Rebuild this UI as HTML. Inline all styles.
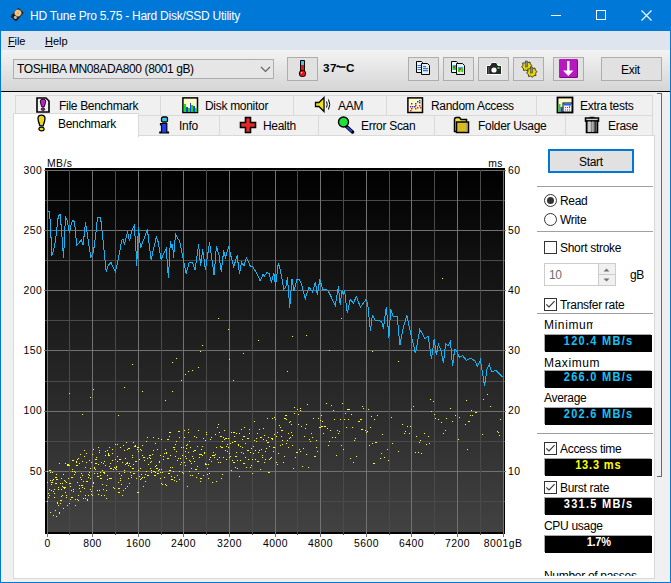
<!DOCTYPE html>
<html><head><meta charset="utf-8">
<style>
*{box-sizing:border-box;margin:0;padding:0}
html,body{width:671px;height:583px;overflow:hidden;background:#F0F0F0;font-family:"Liberation Sans",sans-serif;font-size:11.5px;color:#000}
.a{position:absolute}
.t{position:absolute;white-space:pre;line-height:1;font-size:12px;letter-spacing:-0.3px}
.btn{position:absolute;background:#E1E1E1;border:1px solid #ADADAD}
.tab{position:absolute;background:#F0F0F0;border:1px solid #D9D9D9}
.val{position:absolute;background:#000;box-shadow:-1px -1px 0 #A8A8A8;font-family:"Liberation Sans",sans-serif;font-weight:bold;font-size:12.5px;text-align:center;line-height:1;white-space:pre}
.val span{display:inline-block;transform:scaleX(0.88);transform-origin:50% 0;position:relative;top:0px}
.hr{position:absolute;height:1px;background:#A0A0A0;left:537px;width:116px}
.cb{position:absolute;width:13px;height:13px;border:1px solid #333;background:#fff}
</style></head><body>
<!-- title bar -->
<div class="a" style="left:0;top:0;width:671px;height:31px;background:#0078D7"></div>
<svg class="a" style="left:0;top:0" width="30" height="30" viewBox="0 0 30 30">
 <g transform="translate(17.1 14.6) rotate(41)">
  <rect x="-3.8" y="-5.9" width="7.6" height="11.8" rx="1" fill="#1e1e1e"/>
  <circle cx="-0.4" cy="-1.8" r="3.4" fill="#f6c37a"/>
  <circle cx="-0.4" cy="-1.8" r="1.1" fill="#a8b8d8"/>
  <circle cx="0.5" cy="3.2" r="1.6" fill="#b8b8b8"/>
 </g>
</svg>
<div class="t" style="left:30px;top:10px;color:#fff;font-size:12px;letter-spacing:-0.25px">HD Tune Pro 5.75 - Hard Disk/SSD Utility</div>
<div class="a" style="left:551px;top:15px;width:10px;height:1px;background:#fff"></div>
<div class="a" style="left:596px;top:10px;width:10px;height:10px;border:1px solid #fff"></div>
<svg class="a" style="left:641px;top:10px" width="11" height="11" viewBox="0 0 11 11"><path d="M0.5 0.5L10.5 10.5M10.5 0.5L0.5 10.5" stroke="#fff" stroke-width="1.1"/></svg>
<!-- window borders -->
<div class="a" style="left:0;top:0;width:1px;height:583px;background:#0078D7"></div>
<div class="a" style="left:670px;top:0;width:1px;height:583px;background:#0078D7"></div>
<div class="a" style="left:0;top:582px;width:671px;height:1px;background:#0078D7"></div>
<!-- menu -->
<div class="a" style="left:1px;top:31px;width:669px;height:19px;background:#DEE5EE"></div>
<div class="t" style="left:8px;top:36px;font-size:11px;letter-spacing:-0.1px">File</div>
<div class="a" style="left:8px;top:46px;width:7px;height:1px;background:#000"></div>
<div class="t" style="left:45px;top:36px;font-size:11px;letter-spacing:0">Help</div>
<div class="a" style="left:45px;top:46px;width:8px;height:1px;background:#000"></div>
<!-- toolbar -->
<div class="a" style="left:1px;top:50px;width:669px;height:41px;background:linear-gradient(#F3F3F3,#D5D5D5)"></div>
<div class="a" style="left:1px;top:91px;width:669px;height:1px;background:#000"></div>
<div class="a" style="left:13px;top:59px;width:261px;height:20px;background:#E6E6E6;border:1px solid #ADADAD"></div>
<div class="t" style="left:17px;top:63px;letter-spacing:-0.4px">TOSHIBA MN08ADA800 (8001 gB)</div>
<svg class="a" style="left:260px;top:66px" width="11" height="7"><path d="M1 1L5.5 5.5L10 1" fill="none" stroke="#606060" stroke-width="1.1"/></svg>
<div class="btn" style="left:287px;top:57px;width:31px;height:24px"></div>
<svg class="a" style="left:297px;top:59px" width="11" height="19" viewBox="0 0 11 19">
 <rect x="3" y="1" width="5" height="13" rx="1" fill="#000"/>
 <rect x="4" y="2" width="3" height="4" fill="#3cc8f0"/>
 <rect x="4" y="6" width="3" height="8" fill="#e01818"/>
 <circle cx="5.5" cy="14.5" r="3.6" fill="#000"/>
 <circle cx="5.5" cy="14.5" r="2.7" fill="#e01818"/>
 <circle cx="4.6" cy="13.8" r="0.8" fill="#fff"/>
</svg>
<div class="t" style="left:323px;top:62px;font-weight:bold;font-size:11.7px;letter-spacing:0.4px">37</div>
<svg class="a" style="left:336px;top:64px" width="10" height="5"><path d="M0.8 3.2Q1.8 1.2 3 2.4L3.8 3H9.5" fill="none" stroke="#000" stroke-width="1.6"/></svg>
<div class="t" style="left:346px;top:62px;font-weight:bold;font-size:11.7px;letter-spacing:0">C</div>
<div class="btn" style="left:408px;top:57px;width:31px;height:24px"></div>
<div class="btn" style="left:443px;top:57px;width:31px;height:24px"></div>
<div class="btn" style="left:478px;top:57px;width:31px;height:24px"></div>
<div class="btn" style="left:513px;top:57px;width:31px;height:24px"></div>
<div class="btn" style="left:553px;top:57px;width:31px;height:24px"></div>
<div class="btn" style="left:601px;top:57px;width:61px;height:24px"></div>
<div class="t" style="left:621px;top:64px">Exit</div>
<!-- tabs -->
<div class="tab" style="left:15px;top:95px;width:146px;height:21px"></div>
<div class="tab" style="left:160px;top:95px;width:134px;height:21px"></div>
<div class="tab" style="left:293px;top:95px;width:94px;height:21px"></div>
<div class="tab" style="left:386px;top:95px;width:151px;height:21px"></div>
<div class="tab" style="left:536px;top:95px;width:117px;height:21px"></div>
<div class="tab" style="left:137px;top:115px;width:83px;height:21px"></div>
<div class="tab" style="left:219px;top:115px;width:100px;height:21px"></div>
<div class="tab" style="left:318px;top:115px;width:117px;height:21px"></div>
<div class="tab" style="left:434px;top:115px;width:132px;height:21px"></div>
<div class="tab" style="left:565px;top:115px;width:88px;height:21px"></div>
<div class="a" style="left:13px;top:135px;width:642px;height:444px;background:#fff;border:1px solid #D9D9D9"></div>
<div class="a" style="left:13px;top:113px;width:126px;height:24px;background:#fff;border:1px solid #D9D9D9;border-bottom:none"></div>
<div class="t" style="left:59px;top:100px">File Benchmark</div>
<div class="t" style="left:205px;top:100px">Disk monitor</div>
<div class="t" style="left:338px;top:100px">AAM</div>
<div class="t" style="left:431px;top:100px">Random Access</div>
<div class="t" style="left:580px;top:100px">Extra tests</div>
<div class="t" style="left:58px;top:118px">Benchmark</div>
<div class="t" style="left:179px;top:120px">Info</div>
<div class="t" style="left:263px;top:120px">Health</div>
<div class="t" style="left:361px;top:120px">Error Scan</div>
<div class="t" style="left:478px;top:120px">Folder Usage</div>
<div class="t" style="left:608px;top:120px">Erase</div>
<!-- toolbar icons -->
<svg class="a" style="left:411px;top:57px" width="24" height="22" viewBox="0 0 24 22">
 <path d="M5.5 4.5H10.5L11.5 5.5V15.5H5.5Z" fill="#f4f4f4" stroke="#000"/>
 <rect x="6.5" y="8" width="4" height="1" fill="#1e7ee0"/><rect x="6.5" y="10" width="4" height="1" fill="#1e7ee0"/><rect x="6.5" y="12" width="4" height="1" fill="#1e7ee0"/>
 <path d="M12 8H17V18H12Z" fill="#707070" opacity="0.5"/>
 <path d="M10.5 6.5H16.5L18.5 8.5V17.5H10.5Z" fill="#ececec" stroke="#000"/>
 <rect x="12" y="9" width="3" height="1.2" fill="#1e7ee0"/><rect x="12" y="11" width="5" height="1.2" fill="#1e7ee0"/><rect x="12" y="13" width="5" height="1.2" fill="#1e7ee0"/>
</svg>
<svg class="a" style="left:446px;top:57px" width="24" height="22" viewBox="0 0 24 22">
 <path d="M5.5 4.5H10.5L11.5 5.5V15.5H5.5Z" fill="#f4f4f4" stroke="#000"/>
 <rect x="6.5" y="8" width="4" height="1" fill="#30b0f0"/><rect x="6.5" y="9" width="4" height="4" fill="#20d040"/><circle cx="8" cy="10" r="0.9" fill="#e02020"/>
 <path d="M12 8H17V18H12Z" fill="#707070" opacity="0.5"/>
 <path d="M10.5 6.5H16.5L18.5 8.5V17.5H10.5Z" fill="#ececec" stroke="#000"/>
 <rect x="12" y="10" width="5" height="1" fill="#30b0f0"/><rect x="12" y="11" width="5" height="4" fill="#20d040"/><circle cx="14" cy="12" r="0.9" fill="#e02020"/><rect x="14" y="13" width="1.5" height="2" fill="#e0d020"/>
</svg>
<svg class="a" style="left:485px;top:61px" width="18" height="15" viewBox="0 0 18 15">
 <path d="M1.5 4.5H5L6.5 1.5H11.5L13 4.5H16.5V13.5H1.5Z" fill="#262626" stroke="#fff" stroke-width="1"/>
 <rect x="3" y="6" width="1.3" height="7" fill="#555"/>
 <circle cx="9" cy="9" r="2.6" fill="#fff"/>
 <rect x="12.5" y="6" width="2" height="2" fill="#20e040"/>
</svg>
<svg class="a" style="left:519px;top:59px" width="20" height="19" viewBox="0 0 20 19">
 <g fill="#e8d800" stroke="#222" stroke-width="0.8">
 <path d="M7.5 2L9 3.5L11 3L11.3 5.2L13 6.5L11.6 8.2L12 10.5L9.8 10.6L8.5 12.3L6.8 11L4.6 11.5L4.3 9.3L2.6 8L4 6.3L3.6 4L5.8 3.9Z"/>
 <path d="M12.5 8L14 9.5L16 9L16.3 11.2L18 12.5L16.6 14.2L17 16.5L14.8 16.6L13.5 18.3L11.8 17L9.6 17.5L9.3 15.3L7.6 14L9 12.3L8.6 10L10.8 9.9Z"/>
 </g>
 <rect x="6.5" y="2" width="2" height="6" fill="#8a8a8a" stroke="#333" stroke-width="0.5"/>
 <rect x="11.5" y="8" width="2" height="6" fill="#8a8a8a" stroke="#333" stroke-width="0.5"/>
</svg>
<svg class="a" style="left:559px;top:59px" width="19" height="19" viewBox="0 0 19 19">
 <rect x="0" y="0" width="19" height="19" rx="1.5" fill="#7a0a80"/>
 <rect x="0" y="0" width="18" height="18" rx="1.5" fill="#b818c0"/>
 <path d="M8 2H10.5V11.5H14.5L9.25 17L4 11.5H8Z" fill="#fff"/>
</svg>
<!-- tab icons -->
<svg class="a" style="left:35px;top:96px" width="17" height="18" viewBox="0 0 17 18">
 <path d="M2 2H11L14 5V16H2Z" fill="#f2f2f2" stroke="#000" stroke-width="1.6"/>
 <path d="M5.3 5.2Q5.3 3 8 3Q10.7 3 10.7 5.2Q10.7 7.2 9.1 11H6.9Q5.3 7.2 5.3 5.2Z" fill="#c020c0" stroke="#000" stroke-width="0.9"/>
 <ellipse cx="8" cy="13.2" rx="1.8" ry="1.2" fill="#c020c0" stroke="#000" stroke-width="0.8"/>
</svg>
<svg class="a" style="left:36px;top:114px" width="11" height="18" viewBox="0 0 11 18">
 <path d="M2 4.6Q2 1.2 5.5 1.2Q9 1.2 9 4.6Q9 7 7.1 11.8H3.9Q2 7 2 4.6Z" fill="#e8d820" stroke="#000" stroke-width="1.3"/>
 <ellipse cx="5.5" cy="15" rx="2.6" ry="1.9" fill="#e8d820" stroke="#000" stroke-width="1.2"/>
</svg>
<svg class="a" style="left:182px;top:97px" width="17" height="17" viewBox="0 0 17 17">
 <rect x="0.9" y="0.9" width="14.6" height="14.6" fill="#fffbc8" stroke="#000" stroke-width="1.5"/>
 <path d="M2 7H4V15H2ZM4 10H6V15H4ZM6 11H8V15H6ZM8 6H9V15H8ZM9 8H11V15H9ZM11 9H13V15H11ZM13 11H15V15H13Z" fill="#10e010"/>
 <path d="M4 10H6V15H4ZM8 6H9V15H8ZM11 9H13V15H11Z" fill="#2040f0"/>
</svg>
<svg class="a" style="left:159px;top:116px" width="11" height="18" viewBox="0 0 11 18">
 <rect x="2.5" y="1" width="6" height="5" rx="1.5" fill="#30c8f0" stroke="#000" stroke-width="1.3"/>
 <path d="M1.5 7.5H7.8V16H9.5V17H0.8V16H2.5V9H1.5Z" fill="#2040f0" stroke="#000" stroke-width="1.2"/>
</svg>
<svg class="a" style="left:314px;top:96px" width="19" height="17" viewBox="0 0 19 17">
 <path d="M1.5 6.5H5L10 1.5V15.5L5 10.5H1.5Z" fill="#f0e020" stroke="#000" stroke-width="1.3"/>
 <path d="M12.5 5.5Q14 8.5 12.5 11.5M14.5 3.5Q17 8.5 14.5 13.5" fill="none" stroke="#000" stroke-width="1"/>
</svg>
<svg class="a" style="left:239px;top:116px" width="19" height="18" viewBox="0 0 19 18">
 <path d="M6.5 1.5H11.5V6.5H16.5V11.5H11.5V16.5H6.5V11.5H1.5V6.5H6.5Z" fill="#e82828" stroke="#000" stroke-width="1.6"/>
</svg>
<svg class="a" style="left:407px;top:97px" width="18" height="17" viewBox="0 0 18 17">
 <rect x="0.9" y="0.9" width="14.6" height="14.6" fill="#fffbc8" stroke="#000" stroke-width="1.5"/>
 <g fill="#2040f0"><rect x="3" y="9" width="1.5" height="1.5"/><rect x="4" y="6" width="1.5" height="1.5"/><rect x="7" y="9" width="1.5" height="1.5"/><rect x="8" y="6" width="1.5" height="1.5"/><rect x="10" y="4" width="1.5" height="1.5"/><rect x="12" y="3" width="1.5" height="1.5"/><rect x="12" y="5" width="1.5" height="1.5"/></g>
 <g fill="#e02020"><rect x="3" y="13" width="1.5" height="1.5"/><rect x="4" y="11" width="1.5" height="1.5"/><rect x="5" y="9" width="1.5" height="1.5"/><rect x="8" y="11" width="1.5" height="1.5"/><rect x="8" y="8" width="1.5" height="1.5"/><rect x="10" y="10" width="1.5" height="1.5"/><rect x="12" y="8" width="1.5" height="1.5"/><rect x="13" y="10" width="1.5" height="1.5"/></g>
</svg>
<svg class="a" style="left:337px;top:116px" width="18" height="18" viewBox="0 0 18 18">
 <path d="M9.5 10.5L15.5 16" stroke="#000" stroke-width="3.5" stroke-linecap="round"/>
 <path d="M9.8 10.8L15 15.5" stroke="#3040e0" stroke-width="1.8"/>
 <circle cx="6.5" cy="6" r="5" fill="#20e040" stroke="#000" stroke-width="1.4"/>
</svg>
<svg class="a" style="left:556px;top:96px" width="18" height="18" viewBox="0 0 18 18">
 <rect x="1.5" y="1.5" width="15" height="15" fill="#fffbc8" stroke="#000" stroke-width="1.8"/>
 <path d="M2.5 8H4.5V16H2.5Z" fill="#10e010"/><path d="M4.5 11H6.5V16H4.5Z" fill="#2040f0"/>
 <rect x="7" y="7" width="9" height="9" fill="#f4f4f4" stroke="#000" stroke-width="1"/>
 <rect x="7.5" y="7.5" width="8" height="2" fill="#2060f0"/>
 <g fill="#e02020"><rect x="9" y="11" width="1" height="1"/><rect x="11" y="11" width="1" height="1"/><rect x="13" y="11" width="1" height="1"/><rect x="9" y="13.5" width="1" height="1"/><rect x="13" y="13.5" width="1" height="1"/></g>
 <g fill="#2040f0"><rect x="11" y="13.5" width="1" height="1"/><rect x="13" y="9.8" width="1" height="1"/></g>
</svg>
<svg class="a" style="left:453px;top:116px" width="18" height="18" viewBox="0 0 18 18">
 <path d="M1.5 3.5Q1.5 1.5 3.5 1.5H6.5L8 3.5H13.5V15.5H1.5Z" fill="#f4e040" stroke="#000" stroke-width="1.5"/>
 <path d="M3.5 6H15.5V16.5H3.5Z" fill="#d8bc20" stroke="#000" stroke-width="1.5"/>
 <rect x="13" y="7" width="1" height="9" fill="#b0a070"/>
</svg>
<svg class="a" style="left:584px;top:116px" width="17" height="18" viewBox="0 0 17 18">
 <rect x="5.5" y="0.8" width="5" height="2.5" fill="#000"/>
 <rect x="1.5" y="2" width="13" height="3.2" fill="#d0d0d0" stroke="#000" stroke-width="1.5"/>
 <path d="M2.5 5H13.5V16.5H2.5Z" fill="#888" stroke="#000" stroke-width="1.6"/>
 <rect x="4" y="5.5" width="1.5" height="10.5" fill="#c8c8c8"/><rect x="5.5" y="5.5" width="1" height="10.5" fill="#f4f4f4"/><rect x="8" y="5.5" width="1.5" height="10.5" fill="#aaa"/><rect x="10.5" y="5.5" width="1.5" height="10.5" fill="#333"/>
</svg>
<!-- bracket -->
<div class="a" style="left:661px;top:93px;width:1px;height:384px;background:#696969"></div>
<div class="a" style="left:657px;top:93px;width:5px;height:1px;background:#696969"></div>
<div class="a" style="left:657px;top:476px;width:5px;height:1px;background:#696969"></div>
<!-- chart -->
<svg class="a" style="left:0;top:0" width="671" height="583" viewBox="0 0 671 583">
 <defs><linearGradient id="bg" x1="0" y1="0" x2="0" y2="1"><stop offset="0" stop-color="#000"/><stop offset="1" stop-color="#424242"/></linearGradient></defs>
 <rect x="45" y="168" width="460" height="366" fill="#000"/>
 <rect x="47" y="170" width="457" height="362" fill="url(#bg)"/>
 <g stroke="#646464" stroke-width="1" shape-rendering="crispEdges">
 <line x1="44" y1="170.5" x2="506" y2="170.5" stroke="#727272"/>
 <line x1="45" y1="200.5" x2="505" y2="200.5" stroke="#4A4A4A"/>
 <line x1="44" y1="230.5" x2="506" y2="230.5" stroke="#727272"/>
 <line x1="45" y1="260.5" x2="505" y2="260.5" stroke="#4A4A4A"/>
 <line x1="44" y1="290.5" x2="506" y2="290.5" stroke="#727272"/>
 <line x1="45" y1="320.5" x2="505" y2="320.5" stroke="#4A4A4A"/>
 <line x1="44" y1="350.5" x2="506" y2="350.5" stroke="#727272"/>
 <line x1="45" y1="381.5" x2="505" y2="381.5" stroke="#4A4A4A"/>
 <line x1="44" y1="411.5" x2="506" y2="411.5" stroke="#727272"/>
 <line x1="45" y1="441.5" x2="505" y2="441.5" stroke="#4A4A4A"/>
 <line x1="44" y1="471.5" x2="506" y2="471.5" stroke="#727272"/>
 <line x1="45" y1="501.5" x2="505" y2="501.5" stroke="#4A4A4A"/>
 <line x1="47.5" y1="170" x2="47.5" y2="537" stroke="#727272"/>
 <line x1="69.5" y1="170" x2="69.5" y2="535" stroke="#4A4A4A"/>
 <line x1="92.5" y1="170" x2="92.5" y2="537" stroke="#727272"/>
 <line x1="115.5" y1="170" x2="115.5" y2="535" stroke="#4A4A4A"/>
 <line x1="138.5" y1="170" x2="138.5" y2="537" stroke="#727272"/>
 <line x1="161.5" y1="170" x2="161.5" y2="535" stroke="#4A4A4A"/>
 <line x1="183.5" y1="170" x2="183.5" y2="537" stroke="#727272"/>
 <line x1="206.5" y1="170" x2="206.5" y2="535" stroke="#4A4A4A"/>
 <line x1="229.5" y1="170" x2="229.5" y2="537" stroke="#727272"/>
 <line x1="252.5" y1="170" x2="252.5" y2="535" stroke="#4A4A4A"/>
 <line x1="275.5" y1="170" x2="275.5" y2="537" stroke="#727272"/>
 <line x1="297.5" y1="170" x2="297.5" y2="535" stroke="#4A4A4A"/>
 <line x1="320.5" y1="170" x2="320.5" y2="537" stroke="#727272"/>
 <line x1="343.5" y1="170" x2="343.5" y2="535" stroke="#4A4A4A"/>
 <line x1="366.5" y1="170" x2="366.5" y2="537" stroke="#727272"/>
 <line x1="389.5" y1="170" x2="389.5" y2="535" stroke="#4A4A4A"/>
 <line x1="411.5" y1="170" x2="411.5" y2="537" stroke="#727272"/>
 <line x1="434.5" y1="170" x2="434.5" y2="535" stroke="#4A4A4A"/>
 <line x1="457.5" y1="170" x2="457.5" y2="537" stroke="#727272"/>
 <line x1="480.5" y1="170" x2="480.5" y2="535" stroke="#4A4A4A"/>
 <line x1="503.5" y1="170" x2="503.5" y2="537" stroke="#727272"/>
 </g>
 <path d="M47 471h1v1h-1zM47 482h1v1h-1zM47 501h1v1h-1zM48 497h1v1h-1zM48 497h1v1h-1zM48 493h1v1h-1zM49 470h2v1h-2zM49 489h1v1h-1zM49 495h1v1h-1zM50 512h1v1h-1zM50 472h1v1h-1zM50 480h1v1h-1zM51 482h1v1h-1zM51 490h1v1h-1zM51 484h1v1h-1zM52 480h1v1h-1zM52 482h1v1h-1zM52 472h1v1h-1zM53 491h1v1h-1zM53 479h1v1h-1zM53 515h1v1h-1zM54 493h1v1h-1zM54 489h1v1h-1zM54 497h1v1h-1zM55 510h1v1h-1zM55 483h2v1h-2zM55 477h2v1h-2zM56 474h1v1h-1zM56 479h1v1h-1zM56 516h1v1h-1zM57 479h1v1h-1zM57 502h1v1h-1zM57 503h1v1h-1zM58 487h1v1h-1zM58 489h1v1h-1zM58 505h1v1h-1zM59 463h1v1h-1zM59 513h1v1h-1zM59 512h1v1h-1zM60 483h1v1h-1zM60 500h2v1h-2zM60 503h1v1h-1zM61 478h1v1h-1zM61 496h1v1h-1zM61 489h1v1h-1zM62 495h1v1h-1zM62 486h1v1h-1zM62 483h1v1h-1zM63 474h1v1h-1zM63 487h1v1h-1zM63 508h1v1h-1zM64 487h2v1h-2zM64 480h1v1h-1zM64 488h1v1h-1zM65 463h1v1h-1zM65 492h1v1h-1zM65 481h1v1h-1zM66 482h1v1h-1zM66 495h1v1h-1zM66 497h1v1h-1zM67 465h2v1h-2zM67 505h1v1h-1zM67 464h1v1h-1zM68 478h1v1h-1zM68 464h1v1h-1zM69 483h2v1h-2zM69 465h1v1h-1zM69 503h1v1h-1zM70 483h1v1h-1zM70 499h1v1h-1zM70 486h1v1h-1zM71 477h2v1h-2zM71 497h2v1h-2zM71 490h1v1h-1zM72 471h1v1h-1zM72 460h1v1h-1zM72 469h1v1h-1zM73 460h1v1h-1zM73 491h1v1h-1zM73 489h1v1h-1zM74 471h1v1h-1zM74 474h1v1h-1zM74 474h1v1h-1zM75 499h1v1h-1zM75 472h1v1h-1zM75 505h1v1h-1zM76 461h1v1h-1zM76 462h1v1h-1zM76 465h2v1h-2zM77 482h1v1h-1zM77 499h1v1h-1zM77 459h1v1h-1zM78 500h1v1h-1zM78 458h1v1h-1zM78 495h1v1h-1zM79 488h1v1h-1zM79 463h1v1h-1zM79 485h1v1h-1zM80 491h1v1h-1zM80 454h1v1h-1zM80 477h1v1h-1zM81 473h1v1h-1zM81 485h2v1h-2zM81 479h1v1h-1zM82 487h1v1h-1zM82 475h1v1h-1zM82 461h1v1h-1zM83 498h1v1h-1zM83 481h1v1h-1zM84 456h1v1h-1zM84 488h1v1h-1zM84 450h1v1h-1zM85 467h1v1h-1zM85 495h1v1h-1zM85 498h1v1h-1zM86 481h1v1h-1zM86 453h1v1h-1zM86 462h1v1h-1zM87 499h1v1h-1zM87 500h1v1h-1zM87 481h1v1h-1zM88 477h1v1h-1zM88 495h1v1h-1zM88 474h1v1h-1zM89 475h1v1h-1zM89 472h1v1h-1zM89 460h1v1h-1zM90 489h1v1h-1zM90 468h1v1h-1zM90 478h1v1h-1zM91 462h1v1h-1zM91 494h1v1h-1zM91 491h1v1h-1zM92 495h1v1h-1zM92 454h1v1h-1zM92 486h1v1h-1zM93 449h1v1h-1zM93 482h1v1h-1zM93 483h1v1h-1zM94 468h1v1h-1zM94 467h1v1h-1zM94 473h1v1h-1zM95 463h2v1h-2zM95 469h1v1h-1zM95 459h2v1h-2zM96 457h1v1h-1zM96 457h1v1h-1zM96 459h1v1h-1zM97 473h1v1h-1zM97 490h1v1h-1zM97 476h2v1h-2zM98 494h1v1h-1zM98 464h1v1h-1zM98 447h1v1h-1zM99 450h1v1h-1zM99 452h1v1h-1zM99 490h1v1h-1zM100 475h1v1h-1zM100 478h1v1h-1zM100 472h1v1h-1zM101 478h1v1h-1zM101 462h1v1h-1zM101 495h1v1h-1zM102 484h1v1h-1zM102 470h1v1h-1zM103 489h1v1h-1zM103 463h1v1h-1zM103 472h2v1h-2zM104 495h1v1h-1zM104 461h1v1h-1zM104 473h1v1h-1zM105 451h1v1h-1zM105 465h1v1h-1zM105 455h1v1h-1zM106 485h1v1h-1zM106 498h1v1h-1zM106 490h1v1h-1zM107 475h1v1h-1zM107 479h1v1h-1zM107 450h1v1h-1zM108 453h1v1h-1zM108 455h2v1h-2zM108 454h1v1h-1zM109 447h1v1h-1zM109 478h2v1h-2zM109 466h1v1h-1zM110 468h1v1h-1zM110 463h1v1h-1zM110 468h1v1h-1zM111 468h1v1h-1zM111 478h1v1h-1zM112 460h1v1h-1zM112 449h1v1h-1zM112 453h1v1h-1zM113 469h1v1h-1zM113 487h1v1h-1zM114 488h1v1h-1zM114 467h1v1h-1zM115 444h1v1h-1zM115 468h1v1h-1zM115 459h1v1h-1zM116 466h1v1h-1zM116 469h1v1h-1zM116 467h1v1h-1zM117 456h1v1h-1zM117 461h1v1h-1zM117 444h1v1h-1zM118 492h1v1h-1zM118 482h1v1h-1zM118 488h2v1h-2zM119 473h1v1h-1zM119 492h1v1h-1zM119 459h2v1h-2zM120 478h1v1h-1zM120 447h1v1h-1zM120 480h1v1h-1zM121 475h1v1h-1zM121 484h1v1h-1zM122 462h1v1h-1zM122 495h1v1h-1zM123 445h1v1h-1zM123 490h1v1h-1zM124 450h1v1h-1zM124 472h1v1h-1zM124 470h1v1h-1zM125 488h1v1h-1zM125 458h1v1h-1zM125 464h1v1h-1zM126 442h1v1h-1zM126 463h2v1h-2zM127 462h1v1h-1zM127 449h1v1h-1zM127 486h1v1h-1zM128 465h1v1h-1zM128 448h2v1h-2zM128 478h1v1h-1zM129 463h1v1h-1zM129 483h1v1h-1zM130 466h1v1h-1zM130 472h1v1h-1zM131 475h1v1h-1zM131 477h1v1h-1zM132 455h1v1h-1zM132 468h2v1h-2zM132 457h1v1h-1zM133 473h1v1h-1zM133 464h1v1h-1zM133 442h1v1h-1zM134 446h2v1h-2zM134 473h1v1h-1zM135 461h1v1h-1zM135 445h1v1h-1zM136 478h1v1h-1zM136 461h1v1h-1zM137 449h1v1h-1zM137 447h2v1h-2zM137 492h2v1h-2zM138 447h1v1h-1zM138 451h1v1h-1zM138 470h1v1h-1zM139 476h1v1h-1zM139 459h1v1h-1zM140 449h1v1h-1zM140 468h1v1h-1zM140 479h1v1h-1zM141 478h1v1h-1zM141 474h1v1h-1zM141 450h1v1h-1zM142 445h1v1h-1zM142 455h1v1h-1zM142 477h1v1h-1zM143 486h1v1h-1zM143 457h1v1h-1zM144 477h1v1h-1zM144 457h1v1h-1zM144 460h1v1h-1zM145 481h1v1h-1zM145 474h1v1h-1zM146 441h1v1h-1zM146 471h1v1h-1zM147 458h1v1h-1zM147 475h1v1h-1zM147 437h1v1h-1zM148 464h1v1h-1zM148 475h1v1h-1zM148 464h1v1h-1zM149 457h1v1h-1zM149 455h2v1h-2zM150 458h1v1h-1zM150 462h1v1h-1zM150 468h1v1h-1zM151 470h1v1h-1zM151 472h1v1h-1zM151 461h1v1h-1zM152 454h1v1h-1zM152 454h1v1h-1zM153 450h1v1h-1zM153 471h1v1h-1zM153 437h1v1h-1zM154 475h2v1h-2zM154 471h1v1h-1zM155 466h1v1h-1zM155 443h1v1h-1zM155 472h1v1h-1zM156 468h1v1h-1zM156 465h1v1h-1zM157 449h1v1h-1zM157 473h2v1h-2zM157 468h1v1h-1zM158 438h1v1h-1zM158 470h1v1h-1zM159 461h1v1h-1zM159 469h1v1h-1zM159 462h1v1h-1zM160 472h1v1h-1zM160 455h1v1h-1zM160 478h1v1h-1zM161 469h1v1h-1zM161 483h1v1h-1zM161 439h1v1h-1zM162 484h1v1h-1zM162 472h1v1h-1zM163 459h1v1h-1zM163 456h1v1h-1zM164 477h1v1h-1zM164 453h1v1h-1zM165 449h1v1h-1zM165 484h1v1h-1zM166 485h1v1h-1zM166 453h1v1h-1zM166 452h1v1h-1zM167 439h2v1h-2zM167 458h2v1h-2zM168 473h2v1h-2zM168 458h1v1h-1zM169 432h2v1h-2zM169 436h1v1h-1zM169 470h2v1h-2zM170 455h1v1h-1zM170 467h1v1h-1zM171 476h1v1h-1zM171 479h1v1h-1zM172 479h1v1h-1zM172 467h1v1h-1zM173 447h2v1h-2zM173 471h1v1h-1zM174 480h1v1h-1zM174 477h1v1h-1zM174 449h1v1h-1zM175 444h1v1h-1zM175 444h1v1h-1zM175 456h1v1h-1zM176 481h1v1h-1zM176 441h1v1h-1zM176 451h1v1h-1zM177 460h1v1h-1zM177 475h1v1h-1zM178 431h2v1h-2zM178 458h1v1h-1zM179 479h1v1h-1zM179 437h1v1h-1zM179 471h1v1h-1zM180 458h1v1h-1zM180 464h1v1h-1zM181 462h1v1h-1zM181 447h1v1h-1zM182 472h1v1h-1zM182 455h1v1h-1zM183 473h1v1h-1zM183 447h1v1h-1zM184 430h1v1h-1zM184 462h1v1h-1zM184 437h1v1h-1zM185 465h1v1h-1zM185 456h1v1h-1zM185 451h1v1h-1zM186 445h1v1h-1zM186 448h1v1h-1zM186 458h1v1h-1zM187 444h1v1h-1zM187 486h1v1h-1zM188 432h1v1h-1zM188 429h1v1h-1zM188 452h1v1h-1zM189 441h1v1h-1zM189 471h1v1h-1zM189 460h1v1h-1zM190 475h1v1h-1zM190 461h1v1h-1zM190 447h1v1h-1zM191 468h1v1h-1zM191 463h1v1h-1zM192 456h1v1h-1zM192 475h1v1h-1zM193 451h1v1h-1zM193 458h1v1h-1zM194 436h1v1h-1zM194 450h1v1h-1zM194 461h1v1h-1zM195 469h2v1h-2zM195 450h1v1h-1zM196 477h1v1h-1zM196 437h1v1h-1zM197 466h1v1h-1zM197 446h1v1h-1zM198 473h1v1h-1zM198 430h1v1h-1zM199 457h1v1h-1zM199 454h2v1h-2zM200 481h1v1h-1zM200 478h2v1h-2zM200 454h1v1h-1zM201 454h1v1h-1zM201 449h1v1h-1zM202 455h1v1h-1zM202 446h1v1h-1zM203 475h1v1h-1zM203 438h1v1h-1zM204 453h1v1h-1zM204 452h1v1h-1zM205 440h1v1h-1zM205 463h1v1h-1zM205 464h2v1h-2zM206 432h1v1h-1zM206 434h1v1h-1zM207 474h1v1h-1zM207 468h1v1h-1zM208 478h1v1h-1zM208 464h1v1h-1zM209 473h1v1h-1zM209 459h1v1h-1zM210 457h1v1h-1zM210 439h1v1h-1zM211 461h1v1h-1zM211 437h1v1h-1zM212 455h1v1h-1zM212 482h1v1h-1zM213 452h1v1h-1zM213 455h2v1h-2zM214 457h1v1h-1zM214 455h1v1h-1zM215 434h1v1h-1zM215 454h1v1h-1zM216 481h1v1h-1zM216 447h1v1h-1zM217 459h1v1h-1zM217 427h1v1h-1zM218 424h1v1h-1zM218 462h1v1h-1zM219 457h1v1h-1zM219 432h1v1h-1zM220 462h1v1h-1zM220 446h1v1h-1zM220 436h2v1h-2zM221 447h2v1h-2zM221 478h1v1h-1zM222 474h1v1h-1zM222 441h1v1h-1zM223 437h1v1h-1zM223 457h1v1h-1zM224 439h1v1h-1zM224 430h1v1h-1zM225 450h1v1h-1zM225 438h2v1h-2zM226 446h1v1h-1zM226 459h1v1h-1zM227 444h1v1h-1zM227 451h1v1h-1zM228 438h1v1h-1zM228 447h1v1h-1zM229 453h1v1h-1zM229 457h1v1h-1zM230 456h1v1h-1zM230 443h1v1h-1zM231 432h1v1h-1zM231 470h1v1h-1zM232 442h1v1h-1zM232 460h1v1h-1zM233 432h1v1h-1zM233 462h2v1h-2zM234 441h2v1h-2zM234 432h1v1h-1zM234 436h1v1h-1zM235 467h1v1h-1zM235 456h2v1h-2zM236 433h1v1h-1zM236 452h1v1h-1zM237 460h1v1h-1zM237 468h1v1h-1zM238 445h1v1h-1zM238 444h1v1h-1zM239 476h1v1h-1zM239 433h1v1h-1zM240 460h1v1h-1zM240 446h1v1h-1zM241 429h1v1h-1zM241 452h1v1h-1zM242 447h1v1h-1zM242 439h1v1h-1zM243 453h1v1h-1zM243 436h2v1h-2zM243 463h2v1h-2zM244 427h1v1h-1zM244 436h1v1h-1zM245 457h1v1h-1zM245 443h1v1h-1zM246 467h1v1h-1zM246 467h1v1h-1zM247 438h1v1h-1zM247 450h2v1h-2zM248 459h1v1h-1zM248 438h1v1h-1zM249 429h1v1h-1zM249 433h1v1h-1zM250 467h1v1h-1zM250 452h1v1h-1zM251 465h1v1h-1zM251 448h1v1h-1zM252 459h1v1h-1zM252 473h1v1h-1zM253 453h1v1h-1zM253 446h1v1h-1zM254 421h1v1h-1zM254 440h1v1h-1zM255 450h1v1h-1zM255 459h1v1h-1zM256 441h1v1h-1zM256 438h1v1h-1zM257 433h1v1h-1zM257 461h1v1h-1zM258 452h1v1h-1zM258 461h1v1h-1zM259 429h1v1h-1zM259 450h1v1h-1zM260 469h1v1h-1zM260 437h1v1h-1zM261 449h1v1h-1zM261 437h1v1h-1zM262 455h1v1h-1zM262 457h1v1h-1zM263 428h1v1h-1zM263 439h1v1h-1zM264 462h1v1h-1zM264 435h1v1h-1zM265 459h1v1h-1zM265 451h1v1h-1zM266 448h1v1h-1zM266 440h1v1h-1zM267 442h2v1h-2zM267 418h1v1h-1zM268 437h1v1h-1zM268 472h2v1h-2zM269 459h1v1h-1zM269 446h1v1h-1zM270 458h1v1h-1zM271 438h2v1h-2zM271 457h1v1h-1zM272 418h1v1h-1zM272 439h1v1h-1zM273 451h1v1h-1zM273 447h2v1h-2zM274 434h1v1h-1zM274 417h1v1h-1zM275 419h1v1h-1zM276 436h1v1h-1zM276 462h1v1h-1zM277 432h1v1h-1zM277 464h1v1h-1zM278 453h1v1h-1zM279 425h1v1h-1zM280 427h1v1h-1zM280 445h1v1h-1zM281 430h2v1h-2zM281 436h1v1h-1zM282 444h1v1h-1zM282 440h1v1h-1zM283 462h1v1h-1zM284 418h2v1h-2zM284 456h1v1h-1zM285 415h2v1h-2zM286 443h1v1h-1zM286 419h1v1h-1zM287 440h1v1h-1zM288 447h1v1h-1zM288 433h1v1h-1zM289 438h1v1h-1zM289 422h1v1h-1zM290 437h1v1h-1zM290 421h1v1h-1zM291 424h1v1h-1zM291 432h1v1h-1zM292 435h1v1h-1zM292 445h1v1h-1zM293 468h1v1h-1zM294 407h1v1h-1zM294 413h1v1h-1zM295 457h1v1h-1zM296 452h2v1h-2zM297 409h1v1h-1zM298 424h1v1h-1zM298 414h1v1h-1zM299 449h1v1h-1zM300 451h1v1h-1zM300 408h1v1h-1zM301 426h1v1h-1zM302 466h1v1h-1zM303 448h1v1h-1zM304 436h1v1h-1zM305 428h1v1h-1zM306 454h1v1h-1zM306 424h1v1h-1zM307 404h1v1h-1zM308 467h1v1h-1zM309 439h1v1h-1zM310 441h1v1h-1zM311 433h1v1h-1zM312 437h1v1h-1zM313 418h1v1h-1zM314 456h1v1h-1zM315 456h1v1h-1zM316 440h1v1h-1zM316 447h1v1h-1zM317 451h1v1h-1zM318 418h1v1h-1zM319 427h2v1h-2zM320 420h1v1h-1zM321 415h1v1h-1zM321 426h2v1h-2zM322 421h1v1h-1zM323 433h1v1h-1zM324 426h1v1h-1zM325 426h1v1h-1zM326 403h1v1h-1zM327 428h1v1h-1zM328 445h1v1h-1zM329 441h1v1h-1zM330 430h1v1h-1zM331 405h1v1h-1zM332 437h1v1h-1zM333 410h1v1h-1zM334 419h1v1h-1zM335 437h1v1h-1zM336 455h1v1h-1zM337 430h1v1h-1zM338 433h1v1h-1zM339 431h1v1h-1zM340 419h1v1h-1zM341 445h1v1h-1zM342 403h1v1h-1zM343 449h1v1h-1zM344 419h1v1h-1zM345 413h1v1h-1zM346 427h1v1h-1zM347 409h2v1h-2zM348 419h1v1h-1zM349 409h1v1h-1zM350 458h1v1h-1zM351 414h1v1h-1zM352 427h1v1h-1zM353 462h1v1h-1zM354 440h1v1h-1zM355 438h1v1h-1zM356 456h1v1h-1zM358 421h1v1h-1zM359 421h1v1h-1zM360 419h2v1h-2zM361 429h2v1h-2zM362 406h1v1h-1zM363 408h1v1h-1zM365 430h1v1h-1zM366 432h1v1h-1zM367 431h1v1h-1zM368 409h1v1h-1zM369 445h1v1h-1zM370 427h1v1h-1zM371 416h1v1h-1zM372 443h1v1h-1zM373 463h2v1h-2zM374 419h1v1h-1zM375 442h1v1h-1zM376 442h1v1h-1zM377 415h1v1h-1zM380 458h1v1h-1zM381 453h1v1h-1zM382 434h1v1h-1zM384 457h1v1h-1zM387 449h1v1h-1zM388 460h1v1h-1zM391 417h1v1h-1zM392 443h1v1h-1zM398 451h1v1h-1zM402 424h1v1h-1zM404 433h1v1h-1zM405 431h1v1h-1zM407 426h1v1h-1zM409 433h1v1h-1zM410 426h1v1h-1zM411 409h1v1h-1zM413 406h1v1h-1zM415 452h1v1h-1zM416 436h1v1h-1zM418 452h1v1h-1zM419 442h1v1h-1zM420 440h1v1h-1zM421 453h1v1h-1zM424 433h1v1h-1zM426 444h1v1h-1zM428 436h1v1h-1zM429 443h1v1h-1zM430 399h1v1h-1zM431 411h1v1h-1zM433 401h1v1h-1zM434 414h1v1h-1zM435 418h1v1h-1zM438 419h1v1h-1zM441 422h1v1h-1zM443 433h1v1h-1zM445 430h1v1h-1zM446 418h1v1h-1zM450 408h1v1h-1zM452 421h1v1h-1zM455 415h1v1h-1zM458 439h1v1h-1zM459 417h1v1h-1zM465 424h1v1h-1zM466 400h1v1h-1zM467 449h1v1h-1zM468 421h2v1h-2zM470 415h1v1h-1zM471 410h1v1h-1zM472 415h1v1h-1zM475 412h2v1h-2zM482 434h1v1h-1zM483 399h1v1h-1zM487 394h1v1h-1zM490 406h1v1h-1zM497 431h1v1h-1zM498 432h1v1h-1zM499 435h1v1h-1zM500 419h1v1h-1zM69 393h1v1h-1zM90 397h1v1h-1zM93 389h1v1h-1zM124 387h1v1h-1zM132 364h1v1h-1zM142 391h1v1h-1zM165 400h1v1h-1zM172 391h1v1h-1zM172 362h1v1h-1zM176 358h1v1h-1zM181 380h1v1h-1zM185 374h1v1h-1zM188 371h1v1h-1zM192 370h1v1h-1zM198 367h1v1h-1zM200 351h1v1h-1zM202 345h1v1h-1zM218 318h1v1h-1zM228 329h1v1h-1zM229 359h1v1h-1zM233 380h1v1h-1zM243 353h1v1h-1zM258 340h1v1h-1zM287 371h1v1h-1zM292 336h1v1h-1zM306 335h1v1h-1zM329 350h1v1h-1zM341 318h1v1h-1zM372 351h1v1h-1zM398 361h1v1h-1zM442 278h1v1h-1zM118 415h1v1h-1zM82 414h1v1h-1zM300 410h1v1h-1z" fill="#FFFF00" shape-rendering="crispEdges"/>
 <polyline points="47.4,210.3 49.2,211.7 50.6,224.0 51.6,256.3 53.3,251.5 55.7,239.1 57.7,220.6 58.4,215.8 60.2,214.4 61.8,234.3 63.6,258.4 64.9,227.5 65.7,217.2 67.1,219.9 69.4,233.0 71.5,222.7 72.8,220.3 74.5,222.0 76.7,245.3 79.0,242.8 81.1,239.8 83.1,245.3 85.5,222.2 87.7,237.1 90.7,257.0 93.4,252.2 95.5,236.4 97.5,217.6 100.6,217.6 102.4,234.3 104.8,257.7 106.2,272.1 108.2,265.2 111.0,262.5 113.0,267.3 115.4,272.1 118.5,257.7 121.7,240.5 123.1,239.1 124.4,244.6 127.5,231.6 129.5,241.2 131.9,230.2 134.3,225.4 136.4,256.3 136.7,265.9 138.4,227.5 140.5,248.1 147.4,229.5 151.1,259.7 156.3,237.1 158.1,241.8 161.2,259.6 163.6,253.4 166.3,248.6 168.4,278.2 170.4,241.1 171.4,246.6 172.5,243.8 173.6,257.6 175.5,233.5 177.3,237.7 179.6,241.1 186.2,273.4 189.2,262.4 192.4,262.4 195.1,269.9 198.6,244.5 200.6,265.8 202.7,249.3 205.4,269.9 209.5,242.5 214.1,275.1 216.4,246.3 218.9,254.5 221.3,271.7 223.7,250.4 225.5,257.3 228.8,246.3 230.5,254.5 233.7,266.9 237.1,255.5 239.5,273.7 241.5,262.1 243.9,265.9 246.3,257.7 250.7,266.9 252.9,266.9 256.2,272.4 260.1,280.6 263.1,274.4 264.2,276.5 266.9,272.4 269.4,274.0 271.4,283.0 273.8,272.7 275.6,285.7 278.3,263.0 280.4,270.6 283.8,289.1 285.8,287.1 287.5,277.5 289.7,307.7 292.0,278.8 294.1,291.2 296.8,279.5 299.3,279.5 301.6,284.3 305.3,298.7 308.9,287.1 312.6,291.9 315.4,281.6 317.2,294.6 319.9,279.5 322.6,289.1 326.1,289.2 328.8,292.0 335.3,305.4 337.0,294.7 338.4,286.5 340.2,305.0 341.8,290.6 343.2,294.0 344.6,290.9 347.3,313.3 350.1,299.5 353.5,303.0 356.3,296.4 360.4,307.1 365.9,299.5 367.7,303.6 370.4,331.1 372.3,315.3 375.5,320.8 381.6,321.1 383.4,328.6 386.2,307.4 387.6,321.1 388.9,338.3 390.7,309.4 393.0,316.3 397.2,316.3 399.9,345.1 402.7,330.0 406.8,315.6 410.9,334.1 415.4,353.4 419.8,329.3 425.3,338.9 428.1,336.2 431.5,358.8 434.2,338.9 436.3,355.4 438.4,344.2 440.8,350.2 443.4,363.4 445.6,344.2 448.0,346.0 450.4,341.2 452.6,366.4 454.6,349.6 456.4,350.2 459.4,357.4 462.4,355.6 466.6,360.4 470.2,358.0 475.0,361.0 477.4,366.4 480.4,359.8 484.6,386.2 487.0,369.4 489.4,364.6 491.5,371.8 496.0,370.4 502.6,377.2" fill="none" stroke="#14B4F4" stroke-width="1" stroke-linejoin="miter" shape-rendering="crispEdges"/>
 <g font-family="Liberation Sans" font-size="10.4" letter-spacing="0.45" fill="#000">
 <text x="42.2" y="173.8" text-anchor="end">300</text>
 <text x="508" y="173.8">60</text>
 <text x="42.2" y="233.96" text-anchor="end">250</text>
 <text x="508" y="233.96">50</text>
 <text x="42.2" y="294.12" text-anchor="end">200</text>
 <text x="508" y="294.12">40</text>
 <text x="42.2" y="354.28000000000003" text-anchor="end">150</text>
 <text x="508" y="354.28000000000003">30</text>
 <text x="42.2" y="414.44" text-anchor="end">100</text>
 <text x="508" y="414.44">20</text>
 <text x="42.2" y="474.59999999999997" text-anchor="end">50</text>
 <text x="508" y="474.59999999999997">10</text>
 <text x="47.5" y="547" text-anchor="middle">0</text>
 <text x="92.5" y="547" text-anchor="middle">800</text>
 <text x="138.5" y="547" text-anchor="middle">1600</text>
 <text x="183.5" y="547" text-anchor="middle">2400</text>
 <text x="229.5" y="547" text-anchor="middle">3200</text>
 <text x="275.5" y="547" text-anchor="middle">4000</text>
 <text x="320.5" y="547" text-anchor="middle">4800</text>
 <text x="366.5" y="547" text-anchor="middle">5600</text>
 <text x="411.5" y="547" text-anchor="middle">6400</text>
 <text x="457.5" y="547" text-anchor="middle">7200</text>
 <text x="503" y="547" text-anchor="middle">8001gB</text>
 <text x="47" y="166.5">MB/s</text>
 <text x="503" y="166.5" text-anchor="end">ms</text>
 </g>
</svg>
<!-- right panel -->
<div class="a" style="left:548px;top:149px;width:86px;height:24px;background:#E1E1E1;border:2px solid #0078D7"></div>
<div class="t" style="left:579px;top:156px">Start</div>
<div class="hr" style="top:186px"></div>
<div class="a" style="left:544px;top:194px;width:13px;height:13px;border:1px solid #333;border-radius:50%;background:#fff"></div>
<div class="a" style="left:547px;top:197px;width:7px;height:7px;border-radius:50%;background:#333"></div>
<div class="t" style="left:560px;top:195px">Read</div>
<div class="a" style="left:544px;top:213px;width:13px;height:13px;border:1px solid #333;border-radius:50%;background:#fff"></div>
<div class="t" style="left:560px;top:214px">Write</div>
<div class="hr" style="top:231px"></div>
<div class="cb" style="left:544px;top:241px"></div>
<div class="t" style="left:560px;top:242px">Short stroke</div>
<div class="a" style="left:544px;top:263px;width:72px;height:23px;border:1px solid #CCCCCC;background:#fff"></div>
<div class="a" style="left:598px;top:264px;width:17px;height:21px;background:#F0F0F0;border-left:1px solid #CCCCCC"></div>
<div class="a" style="left:599px;top:274px;width:16px;height:1px;background:#CCCCCC"></div>
<svg class="a" style="left:603px;top:267px" width="7" height="16"><path d="M0.5 4.5L3.5 1.5L6.5 4.5Z M0.5 11.5L3.5 14.5L6.5 11.5Z" fill="#707070"/></svg>
<div class="t" style="left:549px;top:269px;color:#6D6D6D">10</div>
<div class="t" style="left:630px;top:269px">gB</div>
<div class="cb" style="left:544px;top:298px"></div>
<svg class="a" style="left:544px;top:298px" width="13" height="13"><path d="M2.3 6.3L5 9L10.6 3.2" fill="none" stroke="#333" stroke-width="1.1"/></svg>
<div class="t" style="left:560px;top:299px">Transfer rate</div>
<div class="hr" style="top:313px"></div>
<div class="a" style="left:540px;top:315px;width:53px;height:16px;overflow:hidden"><div class="t" style="left:4px;top:4px;letter-spacing:0.6px">Minimum</div></div>
<div class="val" style="left:545px;top:335px;width:107px;height:17px;color:#18C0F8;padding-top:0px"><span style="letter-spacing:1.45px">120.4 MB/s</span></div>
<div class="t" style="left:544px;top:357px;letter-spacing:0.6px">Maximum</div>
<div class="val" style="left:545px;top:371px;width:107px;height:17px;color:#18C0F8;padding-top:0px"><span style="letter-spacing:1.45px">266.0 MB/s</span></div>
<div class="t" style="left:544px;top:392px">Average</div>
<div class="val" style="left:545px;top:408px;width:107px;height:17px;color:#18C0F8;padding-top:0px"><span style="letter-spacing:1.45px">202.6 MB/s</span></div>
<div class="hr" style="top:433px"></div>
<div class="cb" style="left:544px;top:442px"></div>
<svg class="a" style="left:544px;top:442px" width="13" height="13"><path d="M2.3 6.3L5 9L10.6 3.2" fill="none" stroke="#333" stroke-width="1.1"/></svg>
<div class="t" style="left:560px;top:443px">Access time</div>
<div class="val" style="left:545px;top:459px;width:107px;height:17px;color:#FFFF00;padding-top:0px"><span style="letter-spacing:0.95px">13.3 ms</span></div>
<div class="cb" style="left:544px;top:481px"></div>
<svg class="a" style="left:544px;top:481px" width="13" height="13"><path d="M2.3 6.3L5 9L10.6 3.2" fill="none" stroke="#333" stroke-width="1.1"/></svg>
<div class="t" style="left:560px;top:482px">Burst rate</div>
<div class="val" style="left:545px;top:498px;width:107px;height:17px;color:#fff;padding-top:0px"><span style="letter-spacing:1.45px">331.5 MB/s</span></div>
<div class="t" style="left:544px;top:520px">CPU usage</div>
<div class="val" style="left:545px;top:536px;width:107px;height:17px;color:#fff;padding-top:0px"><span style="letter-spacing:-0.3px">1.7%</span></div>
<div class="a" style="left:540px;top:560px;width:114px;height:16px;overflow:hidden"><div class="t" style="left:4px;top:10px">Number of passes</div></div>
</body></html>
